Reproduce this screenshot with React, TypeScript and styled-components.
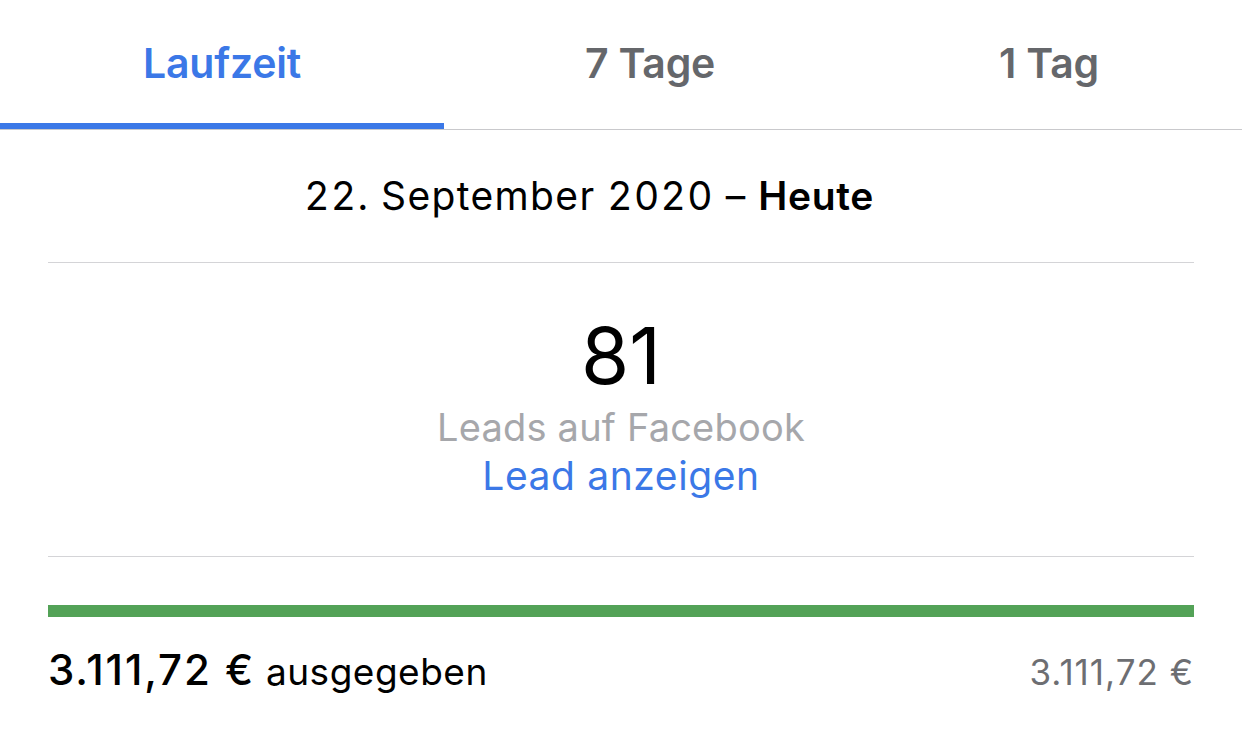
import React, {useState} from "react";
import styled, {createGlobalStyle} from "styled-components";

type TabType = "laufzeit" | "7tage" | "1tag"

const tabs: { id: TabType, title: string, width: string }[] = [
    {id: "laufzeit", title: "Laufzeit", width: "444px"},
    {id: "7tage", title: "7 Tage", width: "412px"},
    {id: "1tag", title: "1 Tag", width: "386px"},
]

const spent = 3111.72
const budget = 3111.72

export default function App() {
    const [active, setActive] = useState<TabType>("laufzeit")
    const progress = Math.min(100, (spent / budget) * 100)

    return (
        <>
            <GlobalStyle/>
            <Page>
                <TabBar>
                    {tabs.map(t => (
                        <Tab key={t.id}
                             $active={active === t.id}
                             $width={t.width}
                             onClick={() => setActive(t.id)}>
                            {t.title}
                        </Tab>
                    ))}
                </TabBar>
                <Content>
                    <DateRow>
                        22. September 2020 – <b>Heute</b>
                    </DateRow>
                    <Divider/>
                    <Stats>
                        <BigNumber>81</BigNumber>
                        <StatLabel>Leads auf Facebook</StatLabel>
                        <LinkText href="#">Lead anzeigen</LinkText>
                    </Stats>
                    <Divider/>
                    <ProgressTrack>
                        <ProgressFill style={{width: `${progress}%`}}/>
                    </ProgressTrack>
                    <SpendRow>
                        <Spent>
                            <strong>3.111,72 €</strong> ausgegeben
                        </Spent>
                        <Budget>3.111,72 €</Budget>
                    </SpendRow>
                </Content>
            </Page>
        </>
    )
}

const GlobalStyle = createGlobalStyle`
    html, body {
        margin: 0;
        padding: 0;
        background: #fff;
    }

    body {
        font-family: Inter, "Noto Sans", sans-serif;
        -webkit-font-smoothing: antialiased;
    }
`

const Page = styled.div`
    width: 1242px;
    height: 734px;
    background: #fff;
    overflow: hidden;
`

const TabBar = styled.div`
    display: flex;
    height: 129px;
    border-bottom: 1px solid #c9c9cc;
`

const Tab = styled.div<{ $active: boolean, $width: string }>`
    width: ${p => p.$width};
    box-sizing: border-box;
    display: flex;
    justify-content: center;
    padding-top: 38px;
    font-size: 41px;
    font-weight: 600;
    letter-spacing: -0.2px;
    color: ${p => p.$active ? "#3b78e7" : "#65676b"};
    border-bottom: 6px solid ${p => p.$active ? "#3b78e7" : "transparent"};
    cursor: pointer;
`

const Content = styled.div`
    padding: 0 48px;
    display: flex;
    flex-direction: column;
`

const DateRow = styled.div`
    height: 132px;
    line-height: 132px;
    text-align: center;
    padding-right: 64px;
    font-size: 39px;
    color: #000;
    letter-spacing: 1.35px;
    font-feature-settings: "tnum";

    b {
        font-weight: 600;
        letter-spacing: 0.6px;
    }
`

const Divider = styled.div`
    height: 1px;
    background: #d4d4d7;
`

const Stats = styled.div`
    height: 293px;
    display: flex;
    flex-direction: column;
    align-items: center;
    padding-top: 48px;
    box-sizing: border-box;
`

const BigNumber = styled.div`
    font-size: 78px;
    font-weight: 400;
    line-height: 90px;
    color: #000;
`

const StatLabel = styled.div`
    font-size: 38px;
    line-height: 46px;
    color: #a6a7ab;
    letter-spacing: 0.2px;
    margin-top: 3px;
`

const LinkText = styled.a`
    font-size: 39px;
    line-height: 52px;
    color: #3b78e7;
    letter-spacing: 0.6px;
    text-decoration: none;
`

const ProgressTrack = styled.div`
    margin-top: 48px;
    height: 12px;
    background: #e4e6eb;
`

const ProgressFill = styled.div`
    height: 100%;
    background: #53a257;
`

const SpendRow = styled.div`
    display: flex;
    justify-content: space-between;
    align-items: baseline;
    padding-top: 27px;
`

const Spent = styled.div`
    font-size: 37px;
    color: #000;
    letter-spacing: 0.5px;

    strong {
        font-size: 42px;
        font-weight: 500;
        letter-spacing: 1.9px;
    }
`

const Budget = styled.div`
    font-size: 35px;
    color: #6d6e72;
    letter-spacing: 1px;
`
